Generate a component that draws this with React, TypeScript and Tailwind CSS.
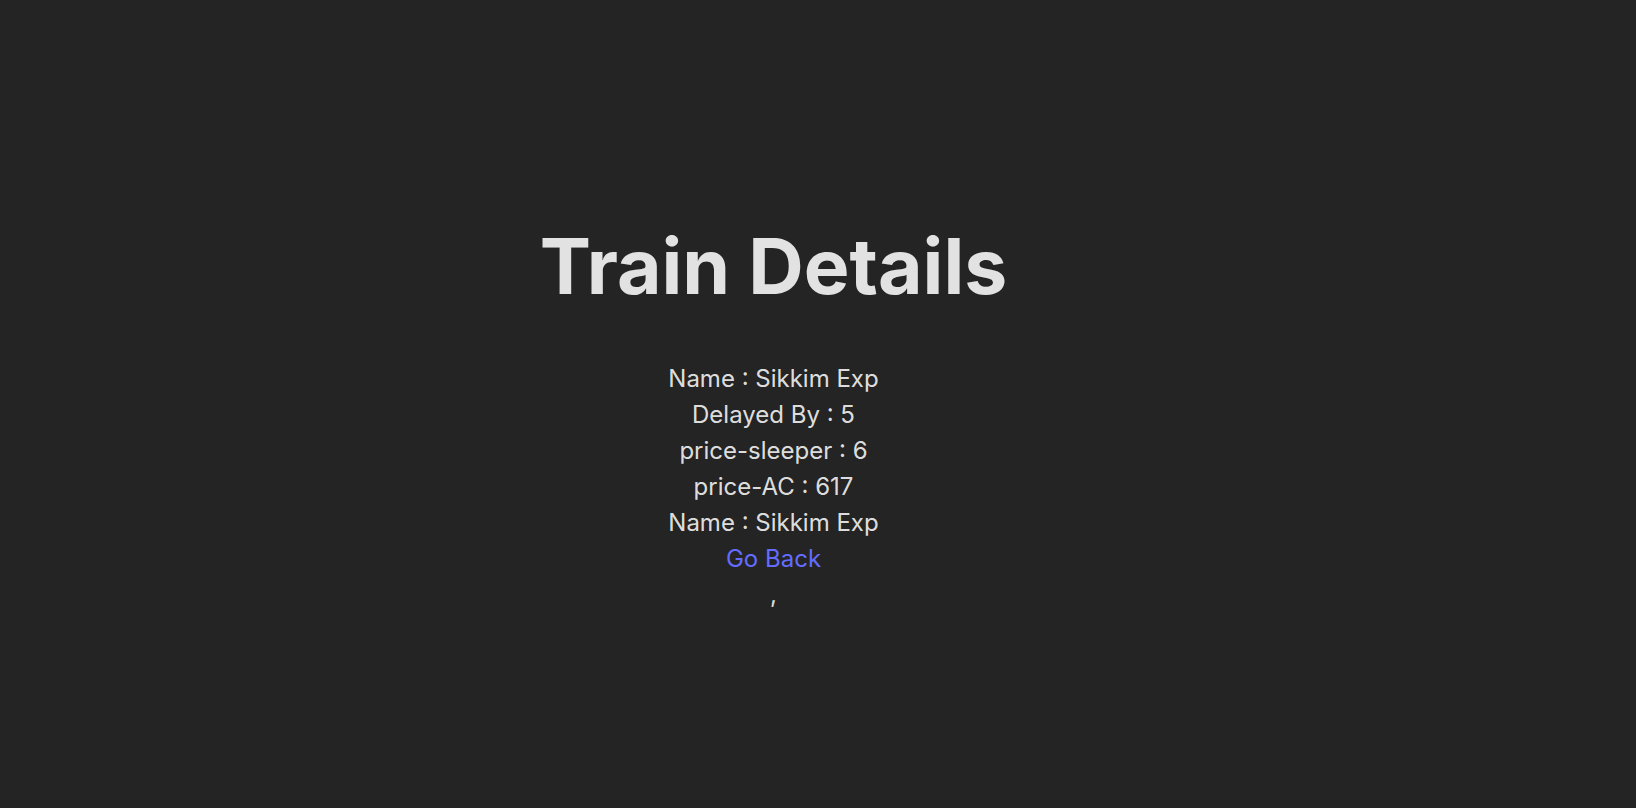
import React from "react";

export default function App() {
  const lines = [
    "Name : Sikkim Exp",
    "Delayed By : 5",
    "price-sleeper : 6",
    "price-AC : 617",
    "Name : Sikkim Exp",
  ];
  return (
    <div
      className="min-h-screen w-full bg-[#242424] flex items-center justify-center text-[rgba(255,255,255,0.87)]"
      style={{ fontFamily: "Inter, 'Noto Sans', sans-serif" }}
    >
      <div className="max-w-[1280px] pt-8 pl-8 pr-[121px] pb-[54px] text-center text-[24px] leading-[1.5]">
        <h1 className="text-[76.8px] leading-[1.1] font-bold my-[51.5px]">Train Details</h1>
        {lines.map((l, i) => (
          <div key={i}>{l}</div>
        ))}
        <div>
          <a href="#" className="text-[#646cff] font-normal">Go Back</a>
        </div>
        <div>,</div>
      </div>
    </div>
  );
}
